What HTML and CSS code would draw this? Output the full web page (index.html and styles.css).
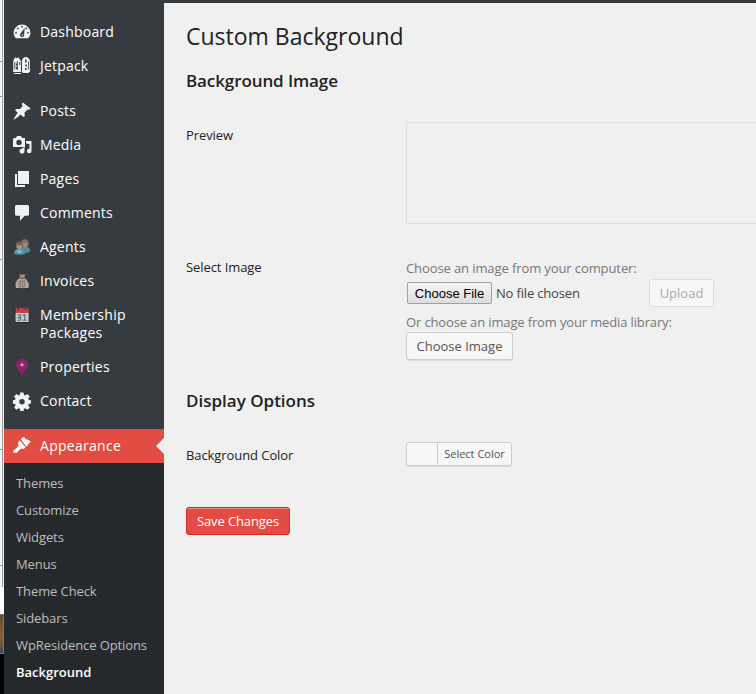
FILE: index.html
```html
<!DOCTYPE html>
<html lang="en">
<head>
<meta charset="utf-8">
<title>Custom Background</title>
<link rel="stylesheet" href="styles.css">
</head>
<body>
<div class="desk-edge">
  <i class="cell c1"></i><i class="cell c2"></i><i class="cell c3"></i><i class="cell c4"></i><i class="cell c5"></i><i class="cell c6"></i>
  <i class="blank"></i><i class="photo"></i><i class="dark"></i>
</div>
<nav class="sidebar">
  <ul class="menu">
    <li><svg viewBox="0 0 20 20"><path fill="#f0f2f4" d="M3.8 16.2C2.5 14.8 1.6 13 1.6 11a8.4 8.4 0 0 1 16.8 0c0 2-.9 3.8-2.2 5.2z"/><g fill="#42606c"><circle cx="10" cy="4.8" r="1"/><circle cx="5.8" cy="6.6" r="1"/><circle cx="14.2" cy="6.6" r="1"/><circle cx="4" cy="10.7" r="1"/><circle cx="16" cy="10.7" r="1"/></g><path fill="#363b3f" d="m12.700 6-.6 7.200a2.100 2.100 0 1 1-3.600-1.700z"/><circle cx="10.200" cy="13" r=".8" fill="#f0f2f4"/></svg><span>Dashboard</span></li>
    <li><svg viewBox="0 0 20 20"><path fill="#f0f2f4" d="M1.200 16V6.800C1.200 4.500 2 3 3 2.100l.5-1 .8 1.200L5.400 2l.8-1 .8 1.400C8.200 3.300 9 4.600 9 7v9zm8.600 0V6c0-2.800 1.500-5 4-5 2.700 0 4.200 2.500 4.200 5.500V16zM2 17h7v1.100H2zm8.400-.9h6.500v1h-6.500z"/><path fill="none" stroke="#363b3f" stroke-width=".9" d="M2.800 6v7.500M5.300 5v9M7.700 6v3M9.400 6v9M16.600 5.500v8"/><path fill="none" stroke="#363b3f" stroke-width="1.500" d="M4.800 7.500v2m0 1.500v2M13.800 3.500v3m.3 2v2m-.3 1.500v2"/></svg><span>Jetpack</span></li>
    <li class="gap"><svg viewBox="0 0 20 20"><path fill="#f0f2f4" d="m10.8 1.400 7.700 5.800-1.200 1.500-1.700-.1-3.200 3.200.5 3.300-1.200 1-3.400-2.500c-2 2.300-4.300 4.100-6.800 5.500.8-2.700 2.200-5.100 4.300-7.200L3 9l1.200-1 3.700.1 2.600-2.900-.7-2.400z"/></svg><span>Posts</span></li>
    <li><svg viewBox="0 0 20 20"><path fill="#f0f2f4" fill-rule="evenodd" d="M2 3h2l1-2h4l1 2h3v9H1V4zm5 1.700a2.700 2.700 0 1 0 0 5.400 2.700 2.700 0 0 0 0-5.400z"/><path fill="#f0f2f4" d="M14 6h5.500v10a2.300 2.300 0 1 1-2-2.300V9h-2v-.5H14z"/><path fill="#f0f2f4" d="M9.500 13.700 12.500 12v4A2.500 2.500 0 1 1 9.500 13.700z"/></svg><span>Media</span></li>
    <li><svg viewBox="0 0 20 20"><path fill="#f0f2f4" d="M6 2h11v13H6zM3 5h2v11h8v2H3z"/></svg><span>Pages</span></li>
    <li><svg viewBox="0 0 20 20"><path fill="#f0f2f4" d="M4.500 2h11A1.500 1.500 0 0 1 17 3.500v7.800a1.500 1.500 0 0 1-1.500 1.500h-2.800L8 17.700v-4.900H4.500A1.500 1.500 0 0 1 3 11.300V3.500A1.500 1.500 0 0 1 4.500 2z"/></svg><span>Comments</span></li>
    <li><svg viewBox="0 0 20 20"><path fill="#548b9b" d="M8 15V11q4-3 9.300-.2l1 3.500L15 16z"/><circle cx="12.800" cy="6.200" r="4" fill="#806e60"/><path fill="#9f8b79" d="M10 6h5.500v2.500L13 11l-3-2z"/><path fill="#519bb1" d="M2 17q0-5.500 5.600-5.500T13 17q-5 1.500-11 0z"/><circle cx="7.500" cy="8.500" r="3.800" fill="#796858"/><path fill="#b1977f" d="M4.600 8.500h5.600l-.6 2.600-2.100 1.700-2-1.500z"/><path fill="#8fc3cf" d="m5 13 2.500 1L10 13l-1 3H6z"/></svg><span>Agents</span></li>
    <li><svg viewBox="0 0 20 20"><path fill="#b5aca0" d="M7.500 6.800h5Q18 11.500 16.500 17q-6 1.500-12.500 0Q2 11.500 7.500 6.800z"/><path fill="#a09078" d="m7.500 3 2 1 1-1.200 1.500 1.200 1.500-1-1.500 4H8z"/><path stroke="#8c5c39" stroke-width="1.300" d="M7 7.200h6.500"/><path fill="none" stroke="#6b6259" stroke-width=".8" stroke-dasharray="1.700 .5" d="M6.300 10.500h7m-8 2.600h9m-8 2.500h7M8.200 9v7.500m2.300-8v8m2.300-7.500v7"/><path fill="#22262a" d="M2.800 17.300h14.500v.9H2.800z"/></svg><span>Invoices</span></li>
    <li class="two"><svg viewBox="0 0 20 20"><path fill="#292b2d" d="M2.500 3h15v15h-15z"/><path fill="#c3cbcb" d="M3.500 8h13.200v9H3.500z"/><path fill="#b9474b" d="M3.500 3h13.200v5H3.500z"/><path fill="#702f32" d="M5 2h2.300v3H5zm7.500 0h2.300v3h-2.300z"/><path fill="none" stroke="#59686d" stroke-width="1.100" d="M5.500 10h3v5.200h-3m0-2.600h3m2.300-2 1.900-1v5.600m-2 0h4"/></svg><span>Membership<br>Packages</span></li>
    <li><svg viewBox="0 0 20 20"><path fill="#93226b" d="M10 2a6 6 0 0 1 6 6c0 3.300-3.500 4.500-6 11C7.500 12.500 4 11.300 4 8a6 6 0 0 1 6-6z"/><circle cx="10" cy="7.800" r="1.600" fill="#caa5b9"/></svg><span>Properties</span></li>
    <li><svg viewBox="0 0 20 20"><path fill="#f0f2f4" fill-rule="evenodd" d="M8.300 1.500h3.200l.5 2.600 1.200.5 2.200-1.500 2.300 2.300-1.500 2.200.5 1.200 2.300.5v3.200l-2.300.5-.5 1.200 1.500 2.200-2.300 2.300-2.200-1.500-1.200.5-.5 2.300H8.300l-.5-2.300-1.200-.5-2.200 1.500-2.300-2.300 1.500-2.200-.5-1.200-2.200-.5V9.300l2.200-.5.500-1.200-1.500-2.200 2.300-2.300 2.200 1.500 1.200-.5zM10 8.100a2.700 2.700 0 1 0 0 5.400 2.700 2.700 0 0 0 0-5.400z"/></svg><span>Contact</span></li>
    <li class="gap current"><svg viewBox="0 0 20 20"><path fill="#fff" d="m8.800 3.300 2.300-2.200 1.900.7.400 1.600 1.500-.2 3.800 2-4.300 5.600zM7.800 4.300l5.800 7-1.800 1.600-2.900-.4-4 4c-.9.900-3.500.8-3.700-.5-.3-1.300.8-1.600 1.700-2.500l3.700-3.600-.7-3z"/></svg><span>Appearance</span></li>
  </ul>
  <ul class="submenu">
    <li>Themes</li><li>Customize</li><li>Widgets</li><li>Menus</li><li>Theme Check</li><li>Sidebars</li><li>WpResidence Options</li><li class="active">Background</li>
  </ul>
</nav>
<main class="content">
  <h1>Custom Background</h1>
  <h2 class="first">Background Image</h2>
  <section class="row preview-row"><div class="label">Preview</div><div class="preview"></div></section>
  <section class="row image-row">
    <div class="label">Select Image</div>
    <div class="field">
      <p>Choose an image from your computer:</p>
      <div class="upload-line"><button class="file-button">Choose File</button><span class="file-name">No file chosen</span><button class="button upload" disabled>Upload</button></div>
      <p class="library">Or choose an image from your media library:</p>
      <button class="button choose">Choose Image</button>
    </div>
  </section>
  <h2>Display Options</h2>
  <section class="row color-row"><div class="label">Background Color</div><button class="color"><span>Select Color</span></button></section>
  <button class="button primary">Save Changes</button>
</main>
</body>
</html>
```
FILE: styles.css
```css
* { box-sizing: border-box; }
body { margin: 0; width: 756px; height: 694px; overflow: hidden; display: flex; background: #f0f0f0; font: 13px/18px "Open Sans", sans-serif; color: #2b2b2b; }
ul, h1, h2, p { margin: 0; padding: 0; }
li { list-style: none; }
button { font-family: inherit; margin: 0; padding: 0; white-space: nowrap; }
.desk-edge { width: 4px; flex: none; background: #f5f5f7; }
.desk-edge i { display: block; }
.cell { border-right: 1px solid #97979b; border-bottom: 1px solid #97979b; width: 3px; }
.c1 { height: 62px; }
.c2 { height: 35px; }
.c3 { height: 163px; }
.c4 { height: 190px; }
.c5 { height: 116px; }
.c6 { height: 21px; border-bottom: 0; }
.blank { height: 27px; background: #fff; }
.photo { height: 40px; border: 1px solid #77736d; border-left: 0; background: linear-gradient(#654b31, #8b6132 60%, #3f4355); }
.dark { height: 40px; background: #000; }
.sidebar { width: 160px; flex: none; background: #363b3f; display: flex; flex-direction: column; }
.menu { padding-top: 15px; }
.menu li { height: 34px; padding: 8px 0 8px 8px; display: flex; gap: 8px; color: #fff; font-size: 14px; line-height: 18px; letter-spacing: .2px; }
.menu svg { width: 20px; height: 20px; flex: none; margin-top: -1px; }
.menu .gap { margin-top: 11px; }
.menu .two { height: 52px; letter-spacing: .3px; }
.menu .current { background: #e14d43; position: relative; letter-spacing: .28px; }
.current::after { content: ""; position: absolute; right: 0; top: 9px; border: 8px solid transparent; border-left: 0; border-right-color: #f0f0f0; }
.submenu { flex: 1; background: #26292c; padding: 7px 0 0 12px; }
.submenu li { height: 27px; line-height: 27px; color: #bcbec0; white-space: nowrap; letter-spacing: -.1px; }
.submenu .active { color: #fff; font-weight: 600; letter-spacing: 0; }
.content { width: 592px; border-top: 3px solid #363b3f; padding-left: 22px; color: #222; }
h1 { font-size: 23px; line-height: 29px; font-weight: 400; padding-top: 19px; height: 67px; }
h2 { font-size: 17px; line-height: 22px; font-weight: 600; height: 22px; }
.first { letter-spacing: -.1px; }
.row { display: flex; }
.label { width: 220px; flex: none; padding-top: 4px; letter-spacing: -.08px; }
.preview-row { margin-top: 30px; height: 133px; }
.preview { flex: 1; height: 102px; border: 1px solid #dedede; border-right: 0; }
.image-row { height: 135px; }
.image-row .label { padding-top: 3px; }
.field { color: #777; padding-top: 4px; letter-spacing: -.1px; }
.upload-line { height: 28px; margin-top: 2px; display: flex; align-items: center; }
.file-button { margin-left: 1px; width: 85px; height: 22px; border: 1px solid #a0a0a0; border-radius: 2px; background: linear-gradient(#f6f6f6, #ddd); color: #000; font: 13px "Liberation Sans", sans-serif; }
.file-name { margin-left: 4px; width: 153px; color: #444; letter-spacing: -.17px; }
.button { height: 28px; border: 1px solid #ccc; border-radius: 3px; background: #f7f7f7; color: #555; font-size: 13px; box-shadow: 0 1px 0 rgba(0,0,0,.08); }
.upload { width: 65px; border-color: #ddd; color: #aaa; box-shadow: none; }
.library { margin-top: 6px; letter-spacing: -.14px; }
.choose { display: block; width: 107px; margin-top: 1px; }
.color-row { margin-top: 30px; height: 65px; }
.color { width: 106px; height: 24px; border: 1px solid #ccc; border-radius: 3px; background: #f7f7f7; color: #555; box-shadow: 0 1px 0 rgba(0,0,0,.08); font-size: 11px; line-height: 22px; display: flex; justify-content: flex-end; }
.color span { width: 74px; height: 22px; border-left: 1px solid #ccc; text-align: center; }
.primary { display: block; width: 104px; color: #fff; background: #e14d43; border-color: #d02a21; box-shadow: inset 0 1px 0 #ec8a85; letter-spacing: -.1px; }
```
